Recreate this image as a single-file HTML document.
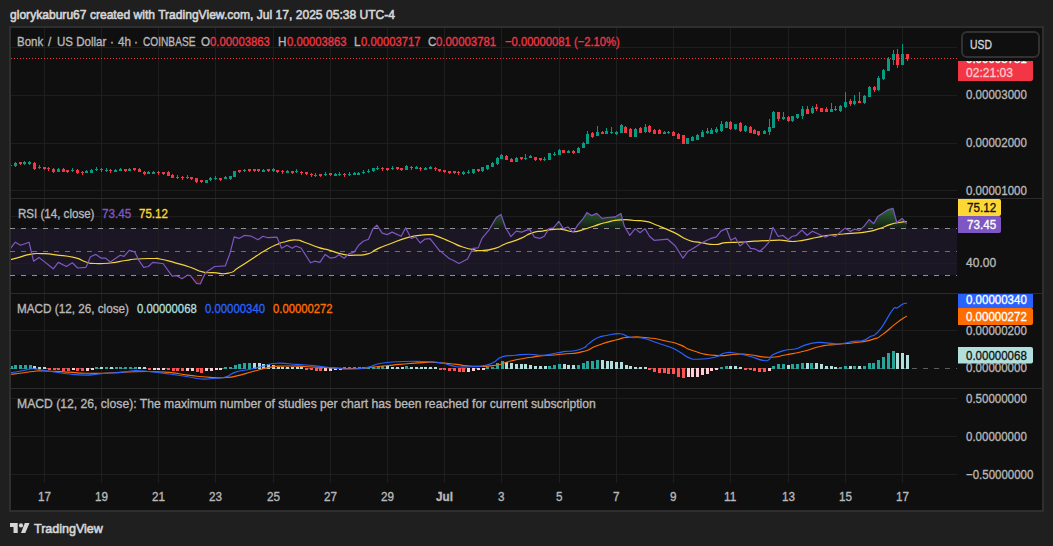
<!DOCTYPE html>
<html><head><meta charset="utf-8"><style>
html,body{margin:0;padding:0;width:1053px;height:546px;overflow:hidden;background:#1f1f1f}
.t{position:absolute;white-space:pre;font-family:"Liberation Sans",sans-serif;transform-origin:0 0;-webkit-text-stroke:0.35px currentColor}
</style></head><body>
<svg width="1053" height="546" viewBox="0 0 1053 546" style="position:absolute;left:0;top:0"><rect x="9.00" y="26.00" width="1035.00" height="486.00" fill="#2e2e2e" /><rect x="11.00" y="28.00" width="1031.00" height="482.00" fill="#0f0f0f" /><rect x="11.00" y="228.00" width="946.00" height="47.00" fill="#1a1624" /><rect x="44.00" y="28.00" width="1.00" height="455.00" fill="#1e1e1e" /><rect x="101.00" y="28.00" width="1.00" height="455.00" fill="#1e1e1e" /><rect x="158.00" y="28.00" width="1.00" height="455.00" fill="#1e1e1e" /><rect x="215.00" y="28.00" width="1.00" height="455.00" fill="#1e1e1e" /><rect x="273.00" y="28.00" width="1.00" height="455.00" fill="#1e1e1e" /><rect x="330.00" y="28.00" width="1.00" height="455.00" fill="#1e1e1e" /><rect x="387.00" y="28.00" width="1.00" height="455.00" fill="#1e1e1e" /><rect x="444.00" y="28.00" width="1.00" height="455.00" fill="#1e1e1e" /><rect x="501.00" y="28.00" width="1.00" height="455.00" fill="#1e1e1e" /><rect x="559.00" y="28.00" width="1.00" height="455.00" fill="#1e1e1e" /><rect x="616.00" y="28.00" width="1.00" height="455.00" fill="#1e1e1e" /><rect x="673.00" y="28.00" width="1.00" height="455.00" fill="#1e1e1e" /><rect x="730.00" y="28.00" width="1.00" height="455.00" fill="#1e1e1e" /><rect x="788.00" y="28.00" width="1.00" height="455.00" fill="#1e1e1e" /><rect x="845.00" y="28.00" width="1.00" height="455.00" fill="#1e1e1e" /><rect x="902.00" y="28.00" width="1.00" height="455.00" fill="#1e1e1e" /><rect x="11.00" y="47.00" width="946.00" height="1.00" fill="#1e1e1e" /><rect x="11.00" y="95.00" width="946.00" height="1.00" fill="#1e1e1e" /><rect x="11.00" y="143.00" width="946.00" height="1.00" fill="#1e1e1e" /><rect x="11.00" y="190.00" width="946.00" height="1.00" fill="#1e1e1e" /><rect x="11.00" y="216.00" width="946.00" height="1.00" fill="#1e1e1e" /><rect x="11.00" y="263.00" width="946.00" height="1.00" fill="#1e1e1e" /><rect x="11.00" y="330.00" width="946.00" height="1.00" fill="#1e1e1e" /><rect x="11.00" y="398.00" width="946.00" height="1.00" fill="#1e1e1e" /><rect x="11.00" y="436.00" width="946.00" height="1.00" fill="#1e1e1e" /><rect x="11.00" y="474.00" width="946.00" height="1.00" fill="#1e1e1e" /><rect x="11.00" y="198.00" width="1031.00" height="1.00" fill="#2b2b2b" /><rect x="11.00" y="293.00" width="1031.00" height="1.00" fill="#2b2b2b" /><rect x="11.00" y="388.00" width="1031.00" height="1.00" fill="#2b2b2b" /><clipPath id="pc"><rect x="11" y="28" width="946" height="170"/></clipPath><clipPath id="rc"><rect x="11" y="199" width="946" height="94"/></clipPath><clipPath id="mc"><rect x="11" y="294" width="946" height="94"/></clipPath><line x1="11" y1="58.5" x2="957" y2="58.5" stroke="#F23645" stroke-width="1" stroke-dasharray="1 2"/><g clip-path="url(#pc)" shape-rendering="crispEdges"><rect x="10" y="163.2" width="1" height="3.6" fill="#089981"/><rect x="9" y="164.8" width="3" height="1.5" fill="#089981"/><rect x="15" y="162.4" width="1" height="4.2" fill="#089981"/><rect x="14" y="163.0" width="3" height="3.0" fill="#089981"/><rect x="20" y="161.8" width="1" height="3.6" fill="#F23645"/><rect x="19" y="162.4" width="3" height="1.5" fill="#F23645"/><rect x="24" y="160.9" width="1" height="3.6" fill="#089981"/><rect x="23" y="162.4" width="3" height="1.5" fill="#089981"/><rect x="29" y="160.9" width="1" height="3.6" fill="#089981"/><rect x="28" y="162.4" width="3" height="1.5" fill="#089981"/><rect x="34" y="161.9" width="1" height="7.7" fill="#F23645"/><rect x="33" y="162.5" width="3" height="6.5" fill="#F23645"/><rect x="39" y="165.2" width="1" height="3.6" fill="#089981"/><rect x="38" y="166.8" width="3" height="1.5" fill="#089981"/><rect x="44" y="166.5" width="1" height="3.6" fill="#F23645"/><rect x="43" y="167.1" width="3" height="1.5" fill="#F23645"/><rect x="48" y="167.2" width="1" height="3.6" fill="#F23645"/><rect x="47" y="167.8" width="3" height="1.5" fill="#F23645"/><rect x="53" y="168.0" width="1" height="4.6" fill="#F23645"/><rect x="52" y="168.6" width="3" height="3.4" fill="#F23645"/><rect x="58" y="168.4" width="1" height="3.8" fill="#089981"/><rect x="57" y="169.0" width="3" height="2.6" fill="#089981"/><rect x="63" y="168.4" width="1" height="3.8" fill="#F23645"/><rect x="62" y="169.0" width="3" height="2.6" fill="#F23645"/><rect x="67" y="169.5" width="1" height="3.6" fill="#F23645"/><rect x="66" y="170.1" width="3" height="1.5" fill="#F23645"/><rect x="72" y="168.2" width="1" height="3.6" fill="#089981"/><rect x="71" y="169.8" width="3" height="1.5" fill="#089981"/><rect x="77" y="169.4" width="1" height="4.2" fill="#F23645"/><rect x="76" y="170.0" width="3" height="3.0" fill="#F23645"/><rect x="82" y="171.1" width="1" height="3.6" fill="#F23645"/><rect x="81" y="171.7" width="3" height="1.5" fill="#F23645"/><rect x="86" y="169.8" width="1" height="3.6" fill="#089981"/><rect x="85" y="171.2" width="3" height="1.5" fill="#089981"/><rect x="91" y="169.0" width="1" height="4.3" fill="#089981"/><rect x="90" y="169.6" width="3" height="3.1" fill="#089981"/><rect x="96" y="167.1" width="1" height="3.6" fill="#089981"/><rect x="95" y="168.6" width="3" height="1.5" fill="#089981"/><rect x="101" y="168.2" width="1" height="3.6" fill="#F23645"/><rect x="100" y="168.8" width="3" height="1.5" fill="#F23645"/><rect x="106" y="168.2" width="1" height="3.6" fill="#089981"/><rect x="105" y="169.7" width="3" height="1.5" fill="#089981"/><rect x="110" y="169.1" width="1" height="3.6" fill="#F23645"/><rect x="109" y="169.7" width="3" height="1.5" fill="#F23645"/><rect x="115" y="168.8" width="1" height="3.6" fill="#089981"/><rect x="114" y="170.3" width="3" height="1.5" fill="#089981"/><rect x="120" y="167.8" width="1" height="3.6" fill="#089981"/><rect x="119" y="169.3" width="3" height="1.5" fill="#089981"/><rect x="125" y="168.8" width="1" height="3.6" fill="#F23645"/><rect x="124" y="169.3" width="3" height="1.5" fill="#F23645"/><rect x="129" y="167.6" width="1" height="3.6" fill="#089981"/><rect x="128" y="169.1" width="3" height="1.5" fill="#089981"/><rect x="134" y="167.7" width="1" height="3.6" fill="#F23645"/><rect x="133" y="168.2" width="3" height="1.5" fill="#F23645"/><rect x="139" y="168.0" width="1" height="4.2" fill="#F23645"/><rect x="138" y="168.6" width="3" height="3.0" fill="#F23645"/><rect x="144" y="171.0" width="1" height="3.5" fill="#F23645"/><rect x="143" y="171.6" width="3" height="2.3" fill="#F23645"/><rect x="148" y="170.6" width="1" height="3.6" fill="#089981"/><rect x="147" y="172.1" width="3" height="1.5" fill="#089981"/><rect x="153" y="170.6" width="1" height="3.6" fill="#089981"/><rect x="152" y="172.1" width="3" height="1.5" fill="#089981"/><rect x="158" y="171.1" width="1" height="3.6" fill="#F23645"/><rect x="157" y="171.7" width="3" height="1.5" fill="#F23645"/><rect x="163" y="171.8" width="1" height="3.6" fill="#F23645"/><rect x="162" y="172.3" width="3" height="1.5" fill="#F23645"/><rect x="168" y="171.4" width="1" height="5.0" fill="#F23645"/><rect x="167" y="172.0" width="3" height="3.8" fill="#F23645"/><rect x="172" y="174.0" width="1" height="4.3" fill="#F23645"/><rect x="171" y="174.6" width="3" height="3.1" fill="#F23645"/><rect x="177" y="175.2" width="1" height="3.6" fill="#089981"/><rect x="176" y="176.7" width="3" height="1.5" fill="#089981"/><rect x="182" y="176.1" width="1" height="3.6" fill="#F23645"/><rect x="181" y="176.7" width="3" height="1.5" fill="#F23645"/><rect x="187" y="175.2" width="1" height="3.6" fill="#089981"/><rect x="186" y="176.7" width="3" height="1.5" fill="#089981"/><rect x="191" y="176.8" width="1" height="3.6" fill="#F23645"/><rect x="190" y="177.3" width="3" height="1.5" fill="#F23645"/><rect x="196" y="177.5" width="1" height="5.0" fill="#F23645"/><rect x="195" y="178.1" width="3" height="3.8" fill="#F23645"/><rect x="201" y="179.8" width="1" height="3.6" fill="#F23645"/><rect x="200" y="180.4" width="3" height="1.5" fill="#F23645"/><rect x="206" y="179.5" width="1" height="3.8" fill="#089981"/><rect x="205" y="180.1" width="3" height="2.6" fill="#089981"/><rect x="210" y="176.9" width="1" height="3.6" fill="#089981"/><rect x="209" y="178.4" width="3" height="1.5" fill="#089981"/><rect x="215" y="176.2" width="1" height="3.6" fill="#089981"/><rect x="214" y="177.7" width="3" height="1.5" fill="#089981"/><rect x="220" y="177.6" width="1" height="3.6" fill="#F23645"/><rect x="219" y="178.2" width="3" height="1.5" fill="#F23645"/><rect x="225" y="175.8" width="1" height="3.6" fill="#089981"/><rect x="224" y="177.3" width="3" height="1.5" fill="#089981"/><rect x="230" y="175.5" width="1" height="4.3" fill="#089981"/><rect x="229" y="176.1" width="3" height="3.1" fill="#089981"/><rect x="234" y="170.7" width="1" height="6.5" fill="#089981"/><rect x="233" y="171.3" width="3" height="5.3" fill="#089981"/><rect x="239" y="169.7" width="1" height="3.6" fill="#F23645"/><rect x="238" y="170.2" width="3" height="1.5" fill="#F23645"/><rect x="244" y="169.2" width="1" height="2.7" fill="#089981"/><rect x="243" y="169.8" width="3" height="1.5" fill="#089981"/><rect x="249" y="168.8" width="1" height="3.6" fill="#F23645"/><rect x="248" y="169.4" width="3" height="1.5" fill="#F23645"/><rect x="254" y="168.8" width="1" height="3.6" fill="#F23645"/><rect x="253" y="169.4" width="3" height="1.5" fill="#F23645"/><rect x="258" y="168.8" width="1" height="3.6" fill="#F23645"/><rect x="257" y="169.4" width="3" height="1.5" fill="#F23645"/><rect x="263" y="168.6" width="1" height="3.6" fill="#089981"/><rect x="262" y="170.1" width="3" height="1.5" fill="#089981"/><rect x="268" y="168.7" width="1" height="3.6" fill="#F23645"/><rect x="267" y="169.2" width="3" height="1.5" fill="#F23645"/><rect x="273" y="167.9" width="1" height="3.6" fill="#089981"/><rect x="272" y="169.4" width="3" height="1.5" fill="#089981"/><rect x="277" y="169.7" width="1" height="3.6" fill="#F23645"/><rect x="276" y="170.2" width="3" height="1.5" fill="#F23645"/><rect x="282" y="170.0" width="1" height="3.6" fill="#F23645"/><rect x="281" y="170.6" width="3" height="1.5" fill="#F23645"/><rect x="287" y="169.8" width="1" height="3.6" fill="#089981"/><rect x="286" y="171.2" width="3" height="1.5" fill="#089981"/><rect x="292" y="170.7" width="1" height="3.6" fill="#F23645"/><rect x="291" y="171.2" width="3" height="1.5" fill="#F23645"/><rect x="296" y="169.4" width="1" height="3.6" fill="#089981"/><rect x="295" y="170.9" width="3" height="1.5" fill="#089981"/><rect x="301" y="171.2" width="1" height="3.6" fill="#F23645"/><rect x="300" y="171.8" width="3" height="1.5" fill="#F23645"/><rect x="306" y="171.5" width="1" height="3.6" fill="#F23645"/><rect x="305" y="172.1" width="3" height="1.5" fill="#F23645"/><rect x="311" y="173.2" width="1" height="3.6" fill="#F23645"/><rect x="310" y="173.8" width="3" height="1.5" fill="#F23645"/><rect x="315" y="173.2" width="1" height="3.6" fill="#089981"/><rect x="314" y="174.7" width="3" height="1.5" fill="#089981"/><rect x="320" y="173.7" width="1" height="3.6" fill="#F23645"/><rect x="319" y="174.2" width="3" height="1.5" fill="#F23645"/><rect x="325" y="172.3" width="1" height="3.6" fill="#089981"/><rect x="324" y="173.8" width="3" height="1.5" fill="#089981"/><rect x="330" y="172.7" width="1" height="3.6" fill="#F23645"/><rect x="329" y="173.2" width="3" height="1.5" fill="#F23645"/><rect x="335" y="172.6" width="1" height="3.6" fill="#089981"/><rect x="334" y="174.1" width="3" height="1.5" fill="#089981"/><rect x="339" y="172.1" width="1" height="3.6" fill="#089981"/><rect x="338" y="173.6" width="3" height="1.5" fill="#089981"/><rect x="344" y="173.0" width="1" height="3.6" fill="#F23645"/><rect x="343" y="173.6" width="3" height="1.5" fill="#F23645"/><rect x="349" y="172.1" width="1" height="3.6" fill="#089981"/><rect x="348" y="173.6" width="3" height="1.5" fill="#089981"/><rect x="354" y="171.8" width="1" height="3.6" fill="#089981"/><rect x="353" y="173.2" width="3" height="1.5" fill="#089981"/><rect x="358" y="171.7" width="1" height="3.6" fill="#089981"/><rect x="357" y="173.2" width="3" height="1.5" fill="#089981"/><rect x="363" y="170.2" width="1" height="3.6" fill="#089981"/><rect x="362" y="171.8" width="3" height="1.5" fill="#089981"/><rect x="368" y="169.4" width="1" height="3.6" fill="#089981"/><rect x="367" y="170.9" width="3" height="1.5" fill="#089981"/><rect x="373" y="167.6" width="1" height="4.3" fill="#089981"/><rect x="372" y="168.2" width="3" height="3.1" fill="#089981"/><rect x="377" y="166.2" width="1" height="3.6" fill="#089981"/><rect x="376" y="167.8" width="3" height="1.5" fill="#089981"/><rect x="382" y="167.2" width="1" height="3.6" fill="#F23645"/><rect x="381" y="167.8" width="3" height="1.5" fill="#F23645"/><rect x="387" y="167.7" width="1" height="3.6" fill="#F23645"/><rect x="386" y="168.2" width="3" height="1.5" fill="#F23645"/><rect x="392" y="166.2" width="1" height="3.6" fill="#089981"/><rect x="391" y="167.8" width="3" height="1.5" fill="#089981"/><rect x="397" y="166.8" width="1" height="3.6" fill="#F23645"/><rect x="396" y="167.4" width="3" height="1.5" fill="#F23645"/><rect x="401" y="167.7" width="1" height="3.6" fill="#F23645"/><rect x="400" y="168.2" width="3" height="1.5" fill="#F23645"/><rect x="406" y="165.1" width="1" height="5.3" fill="#089981"/><rect x="405" y="165.7" width="3" height="4.1" fill="#089981"/><rect x="411" y="166.2" width="1" height="3.6" fill="#F23645"/><rect x="410" y="166.8" width="3" height="1.5" fill="#F23645"/><rect x="416" y="165.8" width="1" height="3.6" fill="#089981"/><rect x="415" y="167.2" width="3" height="1.5" fill="#089981"/><rect x="420" y="167.2" width="1" height="3.6" fill="#F23645"/><rect x="419" y="167.8" width="3" height="1.5" fill="#F23645"/><rect x="425" y="166.8" width="1" height="3.6" fill="#089981"/><rect x="424" y="168.2" width="3" height="1.5" fill="#089981"/><rect x="430" y="165.8" width="1" height="3.6" fill="#089981"/><rect x="429" y="167.2" width="3" height="1.5" fill="#089981"/><rect x="435" y="167.2" width="1" height="3.6" fill="#F23645"/><rect x="434" y="167.8" width="3" height="1.5" fill="#F23645"/><rect x="439" y="168.5" width="1" height="3.6" fill="#F23645"/><rect x="438" y="169.1" width="3" height="1.5" fill="#F23645"/><rect x="444" y="169.5" width="1" height="3.6" fill="#F23645"/><rect x="443" y="170.1" width="3" height="1.5" fill="#F23645"/><rect x="449" y="170.7" width="1" height="3.6" fill="#F23645"/><rect x="448" y="171.2" width="3" height="1.5" fill="#F23645"/><rect x="454" y="170.7" width="1" height="3.6" fill="#F23645"/><rect x="453" y="171.2" width="3" height="1.5" fill="#F23645"/><rect x="458" y="171.2" width="1" height="3.6" fill="#F23645"/><rect x="457" y="171.8" width="3" height="1.5" fill="#F23645"/><rect x="463" y="170.9" width="1" height="3.6" fill="#089981"/><rect x="462" y="172.4" width="3" height="1.5" fill="#089981"/><rect x="468" y="170.2" width="1" height="3.6" fill="#089981"/><rect x="467" y="171.7" width="3" height="1.5" fill="#089981"/><rect x="473" y="168.8" width="1" height="4.7" fill="#089981"/><rect x="472" y="169.4" width="3" height="3.5" fill="#089981"/><rect x="478" y="168.5" width="1" height="3.6" fill="#F23645"/><rect x="477" y="169.1" width="3" height="1.5" fill="#F23645"/><rect x="482" y="166.8" width="1" height="4.8" fill="#089981"/><rect x="481" y="167.4" width="3" height="3.6" fill="#089981"/><rect x="487" y="164.7" width="1" height="4.9" fill="#089981"/><rect x="486" y="165.3" width="3" height="3.7" fill="#089981"/><rect x="492" y="162.4" width="1" height="5.0" fill="#089981"/><rect x="491" y="163.0" width="3" height="3.8" fill="#089981"/><rect x="497" y="157.1" width="1" height="7.5" fill="#089981"/><rect x="496" y="157.7" width="3" height="6.3" fill="#089981"/><rect x="501" y="153.7" width="1" height="5.7" fill="#089981"/><rect x="500" y="155.4" width="3" height="3.4" fill="#089981"/><rect x="506" y="155.1" width="1" height="5.3" fill="#F23645"/><rect x="505" y="155.7" width="3" height="4.1" fill="#F23645"/><rect x="511" y="158.2" width="1" height="4.2" fill="#F23645"/><rect x="510" y="158.8" width="3" height="3.0" fill="#F23645"/><rect x="516" y="157.4" width="1" height="5.0" fill="#089981"/><rect x="515" y="158.0" width="3" height="3.8" fill="#089981"/><rect x="521" y="156.7" width="1" height="3.6" fill="#F23645"/><rect x="520" y="157.2" width="3" height="1.5" fill="#F23645"/><rect x="525" y="154.2" width="1" height="5.5" fill="#089981"/><rect x="524" y="157.6" width="3" height="1.5" fill="#089981"/><rect x="530" y="154.8" width="1" height="3.6" fill="#089981"/><rect x="529" y="156.2" width="3" height="1.5" fill="#089981"/><rect x="535" y="156.6" width="1" height="4.3" fill="#F23645"/><rect x="534" y="157.2" width="3" height="3.1" fill="#F23645"/><rect x="540" y="157.8" width="1" height="3.6" fill="#F23645"/><rect x="539" y="158.4" width="3" height="1.5" fill="#F23645"/><rect x="544" y="157.2" width="1" height="3.6" fill="#089981"/><rect x="543" y="158.8" width="3" height="1.5" fill="#089981"/><rect x="549" y="152.8" width="1" height="7.6" fill="#089981"/><rect x="548" y="153.4" width="3" height="6.4" fill="#089981"/><rect x="554" y="152.2" width="1" height="3.6" fill="#089981"/><rect x="553" y="153.8" width="3" height="1.5" fill="#089981"/><rect x="559" y="149.4" width="1" height="5.9" fill="#089981"/><rect x="558" y="150.0" width="3" height="4.7" fill="#089981"/><rect x="563" y="149.8" width="1" height="3.5" fill="#F23645"/><rect x="562" y="150.4" width="3" height="2.3" fill="#F23645"/><rect x="568" y="150.4" width="1" height="2.9" fill="#089981"/><rect x="567" y="151.0" width="3" height="1.7" fill="#089981"/><rect x="573" y="150.4" width="1" height="3.2" fill="#F23645"/><rect x="572" y="151.0" width="3" height="2.0" fill="#F23645"/><rect x="578" y="147.2" width="1" height="6.1" fill="#089981"/><rect x="577" y="147.8" width="3" height="4.9" fill="#089981"/><rect x="583" y="142.4" width="1" height="6.0" fill="#089981"/><rect x="582" y="143.0" width="3" height="4.8" fill="#089981"/><rect x="587" y="131.0" width="1" height="13.2" fill="#089981"/><rect x="586" y="134.0" width="3" height="9.6" fill="#089981"/><rect x="592" y="132.3" width="1" height="5.3" fill="#F23645"/><rect x="591" y="132.9" width="3" height="4.1" fill="#F23645"/><rect x="597" y="126.0" width="1" height="10.1" fill="#089981"/><rect x="596" y="131.9" width="3" height="3.6" fill="#089981"/><rect x="602" y="131.3" width="1" height="3.0" fill="#F23645"/><rect x="601" y="131.9" width="3" height="1.8" fill="#F23645"/><rect x="606" y="128.0" width="1" height="6.3" fill="#089981"/><rect x="605" y="131.0" width="3" height="2.7" fill="#089981"/><rect x="611" y="127.4" width="1" height="6.2" fill="#089981"/><rect x="610" y="131.5" width="3" height="1.5" fill="#089981"/><rect x="616" y="131.4" width="1" height="3.2" fill="#089981"/><rect x="615" y="132.0" width="3" height="2.0" fill="#089981"/><rect x="621" y="124.4" width="1" height="8.9" fill="#089981"/><rect x="620" y="125.0" width="3" height="7.7" fill="#089981"/><rect x="625" y="126.4" width="1" height="6.9" fill="#F23645"/><rect x="624" y="127.0" width="3" height="5.7" fill="#F23645"/><rect x="630" y="127.9" width="1" height="9.5" fill="#F23645"/><rect x="629" y="128.5" width="3" height="8.3" fill="#F23645"/><rect x="635" y="128.3" width="1" height="9.1" fill="#089981"/><rect x="634" y="128.9" width="3" height="7.9" fill="#089981"/><rect x="640" y="127.4" width="1" height="5.9" fill="#F23645"/><rect x="639" y="128.0" width="3" height="4.7" fill="#F23645"/><rect x="645" y="124.0" width="1" height="8.6" fill="#089981"/><rect x="644" y="127.0" width="3" height="5.0" fill="#089981"/><rect x="649" y="125.2" width="1" height="7.4" fill="#F23645"/><rect x="648" y="125.8" width="3" height="6.2" fill="#F23645"/><rect x="654" y="129.4" width="1" height="4.9" fill="#F23645"/><rect x="653" y="130.0" width="3" height="3.7" fill="#F23645"/><rect x="659" y="129.0" width="1" height="5.3" fill="#F23645"/><rect x="658" y="130.4" width="3" height="3.3" fill="#F23645"/><rect x="664" y="131.0" width="1" height="3.1" fill="#089981"/><rect x="663" y="132.0" width="3" height="1.5" fill="#089981"/><rect x="668" y="130.5" width="1" height="3.1" fill="#089981"/><rect x="667" y="131.5" width="3" height="1.5" fill="#089981"/><rect x="673" y="131.4" width="1" height="4.9" fill="#F23645"/><rect x="672" y="132.0" width="3" height="3.7" fill="#F23645"/><rect x="678" y="133.4" width="1" height="6.0" fill="#F23645"/><rect x="677" y="134.0" width="3" height="4.8" fill="#F23645"/><rect x="683" y="134.7" width="1" height="9.7" fill="#F23645"/><rect x="682" y="135.3" width="3" height="8.5" fill="#F23645"/><rect x="687" y="137.7" width="1" height="6.7" fill="#089981"/><rect x="686" y="138.3" width="3" height="5.5" fill="#089981"/><rect x="692" y="136.2" width="1" height="5.1" fill="#089981"/><rect x="691" y="136.8" width="3" height="3.9" fill="#089981"/><rect x="697" y="134.4" width="1" height="6.0" fill="#089981"/><rect x="696" y="135.0" width="3" height="4.8" fill="#089981"/><rect x="702" y="130.4" width="1" height="7.0" fill="#089981"/><rect x="701" y="131.5" width="3" height="5.3" fill="#089981"/><rect x="707" y="128.0" width="1" height="6.0" fill="#089981"/><rect x="706" y="131.0" width="3" height="2.4" fill="#089981"/><rect x="711" y="128.0" width="1" height="6.3" fill="#089981"/><rect x="710" y="130.0" width="3" height="3.7" fill="#089981"/><rect x="716" y="127.0" width="1" height="5.6" fill="#089981"/><rect x="715" y="129.0" width="3" height="3.0" fill="#089981"/><rect x="721" y="121.0" width="1" height="10.6" fill="#089981"/><rect x="720" y="124.0" width="3" height="7.0" fill="#089981"/><rect x="726" y="121.0" width="1" height="7.3" fill="#089981"/><rect x="725" y="121.5" width="3" height="6.2" fill="#089981"/><rect x="730" y="121.4" width="1" height="8.1" fill="#F23645"/><rect x="729" y="122.0" width="3" height="6.9" fill="#F23645"/><rect x="735" y="123.7" width="1" height="5.8" fill="#089981"/><rect x="734" y="124.3" width="3" height="4.6" fill="#089981"/><rect x="740" y="122.2" width="1" height="9.6" fill="#F23645"/><rect x="739" y="122.8" width="3" height="8.4" fill="#F23645"/><rect x="745" y="125.4" width="1" height="6.4" fill="#089981"/><rect x="744" y="126.0" width="3" height="5.2" fill="#089981"/><rect x="750" y="126.4" width="1" height="6.9" fill="#F23645"/><rect x="749" y="127.0" width="3" height="5.7" fill="#F23645"/><rect x="754" y="129.0" width="1" height="5.3" fill="#F23645"/><rect x="753" y="129.6" width="3" height="4.1" fill="#F23645"/><rect x="758" y="130.6" width="1" height="5.0" fill="#F23645"/><rect x="757" y="131.2" width="3" height="3.8" fill="#F23645"/><rect x="764" y="130.1" width="1" height="4.2" fill="#089981"/><rect x="763" y="130.7" width="3" height="3.0" fill="#089981"/><rect x="769" y="119.3" width="1" height="15.5" fill="#089981"/><rect x="768" y="126.9" width="3" height="5.3" fill="#089981"/><rect x="773" y="111.4" width="1" height="16.8" fill="#089981"/><rect x="772" y="112.0" width="3" height="15.6" fill="#089981"/><rect x="778" y="112.0" width="1" height="9.0" fill="#F23645"/><rect x="777" y="112.4" width="3" height="6.9" fill="#F23645"/><rect x="783" y="112.0" width="1" height="7.9" fill="#089981"/><rect x="782" y="117.0" width="3" height="2.3" fill="#089981"/><rect x="788" y="116.4" width="1" height="5.2" fill="#F23645"/><rect x="787" y="117.0" width="3" height="4.0" fill="#F23645"/><rect x="792" y="115.6" width="1" height="6.0" fill="#089981"/><rect x="791" y="116.2" width="3" height="4.8" fill="#089981"/><rect x="797" y="113.8" width="1" height="4.8" fill="#089981"/><rect x="796" y="114.4" width="3" height="3.6" fill="#089981"/><rect x="802" y="105.9" width="1" height="13.1" fill="#089981"/><rect x="801" y="109.0" width="3" height="7.0" fill="#089981"/><rect x="807" y="106.0" width="1" height="8.1" fill="#F23645"/><rect x="806" y="108.6" width="3" height="4.9" fill="#F23645"/><rect x="812" y="106.0" width="1" height="7.5" fill="#089981"/><rect x="811" y="107.9" width="3" height="5.0" fill="#089981"/><rect x="816" y="104.0" width="1" height="7.0" fill="#F23645"/><rect x="815" y="106.8" width="3" height="1.8" fill="#F23645"/><rect x="821" y="107.7" width="1" height="4.6" fill="#F23645"/><rect x="820" y="108.3" width="3" height="3.4" fill="#F23645"/><rect x="826" y="107.0" width="1" height="5.3" fill="#F23645"/><rect x="825" y="109.4" width="3" height="2.3" fill="#F23645"/><rect x="831" y="103.3" width="1" height="9.0" fill="#089981"/><rect x="830" y="109.0" width="3" height="2.7" fill="#089981"/><rect x="835" y="106.0" width="1" height="4.8" fill="#F23645"/><rect x="834" y="108.6" width="3" height="1.6" fill="#F23645"/><rect x="840" y="105.0" width="1" height="6.6" fill="#089981"/><rect x="839" y="105.6" width="3" height="5.4" fill="#089981"/><rect x="845" y="92.0" width="1" height="15.6" fill="#089981"/><rect x="844" y="102.2" width="3" height="4.8" fill="#089981"/><rect x="850" y="99.0" width="1" height="7.0" fill="#F23645"/><rect x="849" y="100.7" width="3" height="3.7" fill="#F23645"/><rect x="854" y="95.0" width="1" height="9.6" fill="#089981"/><rect x="853" y="100.7" width="3" height="3.3" fill="#089981"/><rect x="859" y="92.0" width="1" height="11.1" fill="#F23645"/><rect x="858" y="100.7" width="3" height="1.8" fill="#F23645"/><rect x="864" y="95.1" width="1" height="8.4" fill="#089981"/><rect x="863" y="95.7" width="3" height="7.2" fill="#089981"/><rect x="869" y="86.4" width="1" height="11.0" fill="#089981"/><rect x="868" y="87.0" width="3" height="9.8" fill="#089981"/><rect x="874" y="85.8" width="1" height="6.2" fill="#F23645"/><rect x="873" y="86.6" width="3" height="3.4" fill="#F23645"/><rect x="878" y="76.0" width="1" height="15.0" fill="#089981"/><rect x="877" y="78.0" width="3" height="12.0" fill="#089981"/><rect x="883" y="69.0" width="1" height="10.6" fill="#089981"/><rect x="882" y="70.0" width="3" height="9.0" fill="#089981"/><rect x="888" y="57.0" width="1" height="14.3" fill="#089981"/><rect x="887" y="59.0" width="3" height="11.7" fill="#089981"/><rect x="893" y="49.8" width="1" height="15.1" fill="#089981"/><rect x="892" y="54.2" width="3" height="5.5" fill="#089981"/><rect x="897" y="49.0" width="1" height="18.7" fill="#F23645"/><rect x="896" y="54.2" width="3" height="10.7" fill="#F23645"/><rect x="902" y="44.0" width="1" height="20.9" fill="#089981"/><rect x="901" y="54.2" width="3" height="10.7" fill="#089981"/><rect x="907" y="54.2" width="1" height="6.6" fill="#F23645"/><rect x="906" y="54.2" width="3" height="4.4" fill="#F23645"/></g><defs><linearGradient id="gg" gradientUnits="userSpaceOnUse" x1="0" y1="207" x2="0" y2="229"><stop offset="0" stop-color="#2f6a33"/><stop offset="1" stop-color="#131c15"/></linearGradient><linearGradient id="rg" gradientUnits="userSpaceOnUse" x1="0" y1="275" x2="0" y2="286"><stop offset="0" stop-color="#1c1212"/><stop offset="1" stop-color="#5e1a1a"/></linearGradient><clipPath id="ob"><rect x="11" y="199" width="946" height="29.5"/></clipPath><clipPath id="os"><rect x="11" y="275" width="946" height="18"/></clipPath></defs><polygon points="10.0,228.5 10.0,249.0 15.3,242.2 20.6,245.3 29.0,242.2 33.6,261.2 38.9,257.4 53.3,268.8 58.3,262.4 66.5,266.5 72.3,262.8 77.6,268.0 86.0,267.3 90.5,256.7 95.9,254.4 101.2,258.2 105.7,258.2 110.3,262.0 120.2,255.2 124.0,256.4 129.3,250.3 134.6,251.8 139.2,260.9 143.7,267.3 148.3,266.5 152.9,262.4 162.0,263.5 163.0,263.5 172.2,276.1 176.7,275.7 182.0,278.7 187.4,275.2 190.4,275.7 196.5,283.3 200.3,284.0 205.6,272.6 214.7,266.5 225.3,265.8 229.9,253.6 234.2,236.9 239.0,238.4 244.3,235.4 251.2,236.2 258.0,239.7 263.0,236.2 267.9,237.7 277.0,237.2 281.6,248.3 286.9,245.3 292.2,248.3 296.0,246.0 301.3,248.3 310.5,262.8 314.6,261.2 319.9,262.4 325.2,254.4 330.5,258.2 335.1,257.4 338.9,254.8 344.2,258.2 348.8,253.9 354.1,252.1 358.6,245.3 363.2,241.2 368.5,239.2 373.1,228.6 376.9,225.2 382.2,233.1 387.2,234.6 392.1,232.1 401.2,236.2 405.7,227.8 411.1,238.4 415.6,236.9 420.2,243.0 424.7,239.2 430.1,238.7 439.2,250.3 443.7,253.9 449.1,258.5 453.6,260.5 458.9,263.5 467.6,259.0 472.9,248.3 478.2,247.9 482.0,238.4 488.9,230.1 496.5,217.2 501.0,214.4 505.6,227.8 510.9,236.6 516.2,231.1 521.6,232.1 526.9,230.1 529.9,229.6 534.5,237.2 539.8,238.4 544.3,236.2 548.9,228.6 553.5,227.8 558.8,221.4 563.3,228.6 567.9,227.0 573.2,232.4 577.8,224.8 583.1,218.7 586.9,212.6 591.5,215.6 596.8,213.4 602.1,218.4 607.4,217.5 615.0,216.9 620.9,213.4 624.4,226.3 629.8,235.4 635.1,228.6 640.1,232.7 645.0,228.6 649.5,236.2 654.1,240.3 667.8,239.2 675.3,246.0 683.0,258.2 687.5,251.8 696.6,246.3 701.2,243.0 710.3,238.7 716.4,236.9 720.9,231.1 726.3,228.6 730.8,240.3 735.4,237.7 739.9,246.0 745.3,241.5 750.6,248.3 754.4,248.8 759.7,251.4 764.6,247.1 769.1,241.8 772.9,227.4 778.2,236.5 782.8,235.3 788.1,239.8 791.9,236.5 796.5,235.3 801.8,230.1 807.1,235.3 812.4,231.2 825.3,237.2 829.9,235.0 835.2,236.5 845.1,228.1 850.4,231.6 854.2,229.2 859.5,230.4 864.1,226.1 869.1,219.5 873.7,223.6 877.8,216.4 887.7,209.9 893.0,208.4 896.8,222.5 902.1,218.5 906.7,223.6 906.7,228.5" fill="url(#gg)" clip-path="url(#ob)"/><polygon points="10.0,275.0 10.0,249.0 15.3,242.2 20.6,245.3 29.0,242.2 33.6,261.2 38.9,257.4 53.3,268.8 58.3,262.4 66.5,266.5 72.3,262.8 77.6,268.0 86.0,267.3 90.5,256.7 95.9,254.4 101.2,258.2 105.7,258.2 110.3,262.0 120.2,255.2 124.0,256.4 129.3,250.3 134.6,251.8 139.2,260.9 143.7,267.3 148.3,266.5 152.9,262.4 162.0,263.5 163.0,263.5 172.2,276.1 176.7,275.7 182.0,278.7 187.4,275.2 190.4,275.7 196.5,283.3 200.3,284.0 205.6,272.6 214.7,266.5 225.3,265.8 229.9,253.6 234.2,236.9 239.0,238.4 244.3,235.4 251.2,236.2 258.0,239.7 263.0,236.2 267.9,237.7 277.0,237.2 281.6,248.3 286.9,245.3 292.2,248.3 296.0,246.0 301.3,248.3 310.5,262.8 314.6,261.2 319.9,262.4 325.2,254.4 330.5,258.2 335.1,257.4 338.9,254.8 344.2,258.2 348.8,253.9 354.1,252.1 358.6,245.3 363.2,241.2 368.5,239.2 373.1,228.6 376.9,225.2 382.2,233.1 387.2,234.6 392.1,232.1 401.2,236.2 405.7,227.8 411.1,238.4 415.6,236.9 420.2,243.0 424.7,239.2 430.1,238.7 439.2,250.3 443.7,253.9 449.1,258.5 453.6,260.5 458.9,263.5 467.6,259.0 472.9,248.3 478.2,247.9 482.0,238.4 488.9,230.1 496.5,217.2 501.0,214.4 505.6,227.8 510.9,236.6 516.2,231.1 521.6,232.1 526.9,230.1 529.9,229.6 534.5,237.2 539.8,238.4 544.3,236.2 548.9,228.6 553.5,227.8 558.8,221.4 563.3,228.6 567.9,227.0 573.2,232.4 577.8,224.8 583.1,218.7 586.9,212.6 591.5,215.6 596.8,213.4 602.1,218.4 607.4,217.5 615.0,216.9 620.9,213.4 624.4,226.3 629.8,235.4 635.1,228.6 640.1,232.7 645.0,228.6 649.5,236.2 654.1,240.3 667.8,239.2 675.3,246.0 683.0,258.2 687.5,251.8 696.6,246.3 701.2,243.0 710.3,238.7 716.4,236.9 720.9,231.1 726.3,228.6 730.8,240.3 735.4,237.7 739.9,246.0 745.3,241.5 750.6,248.3 754.4,248.8 759.7,251.4 764.6,247.1 769.1,241.8 772.9,227.4 778.2,236.5 782.8,235.3 788.1,239.8 791.9,236.5 796.5,235.3 801.8,230.1 807.1,235.3 812.4,231.2 825.3,237.2 829.9,235.0 835.2,236.5 845.1,228.1 850.4,231.6 854.2,229.2 859.5,230.4 864.1,226.1 869.1,219.5 873.7,223.6 877.8,216.4 887.7,209.9 893.0,208.4 896.8,222.5 902.1,218.5 906.7,223.6 906.7,275.0" fill="url(#rg)" clip-path="url(#os)"/><line x1="10" y1="228.5" x2="957" y2="228.5" stroke="#909094" stroke-width="1" stroke-dasharray="5 6"/><line x1="10" y1="251.5" x2="957" y2="251.5" stroke="#6e6e72" stroke-width="1" stroke-dasharray="5 6"/><line x1="10" y1="275.5" x2="957" y2="275.5" stroke="#909094" stroke-width="1" stroke-dasharray="5 6"/><path d="M10.0,259.7 C13.0,258.9 12.5,259.2 19.1,257.4 C25.7,255.6 22.2,255.7 29.8,254.4 C37.4,253.1 33.3,253.5 41.9,253.6 C50.5,253.7 45.0,253.5 55.6,254.8 C66.2,256.1 63.7,255.0 73.8,257.4 C83.9,259.8 78.9,260.0 86.0,262.0 C93.1,264.0 87.0,263.2 95.1,263.5 C103.2,263.8 100.2,264.0 110.3,263.0 C120.4,262.0 116.9,261.8 125.5,260.5 C134.1,259.2 127.0,259.7 136.1,259.0 C145.2,258.3 144.9,258.5 152.9,258.5 C160.9,258.5 152.6,257.6 160.0,259.0 C167.4,260.4 165.1,260.0 175.2,262.8 C185.3,265.6 181.3,264.3 190.4,267.3 C199.5,270.3 195.0,270.1 202.6,271.9 C210.2,273.7 204.6,272.2 213.2,272.6 C221.8,273.0 219.8,274.9 228.4,273.1 C237.0,271.3 230.4,272.5 239.0,267.3 C247.6,262.1 245.1,263.2 254.2,257.4 C263.3,251.6 258.8,254.1 266.4,249.8 C274.0,245.5 270.4,247.3 277.0,244.5 C283.6,241.7 279.8,243.0 286.1,241.5 C292.4,240.0 289.9,239.8 296.0,240.0 C302.1,240.2 296.7,239.7 304.4,242.2 C312.1,244.7 310.6,244.9 319.1,247.6 C327.6,250.3 321.7,248.0 329.8,250.3 C337.9,252.6 334.8,252.8 343.4,254.4 C352.0,256.0 347.5,255.4 355.6,255.2 C363.7,255.0 360.7,255.9 367.8,253.9 C374.9,251.9 369.8,252.3 376.9,249.1 C384.0,245.9 378.9,248.0 389.0,244.2 C399.1,240.4 397.2,240.6 407.3,237.7 C417.4,234.8 411.8,236.4 419.4,235.4 C427.0,234.4 424.5,234.4 430.1,234.6 C435.7,234.8 429.5,233.6 436.1,235.9 C442.7,238.2 441.2,237.9 449.8,241.5 C458.4,245.1 454.5,244.2 462.0,246.8 C469.5,249.4 465.8,248.1 472.2,249.4 C478.6,250.7 473.7,251.0 481.3,250.6 C488.9,250.2 486.9,250.6 495.0,248.3 C503.1,246.0 497.0,247.1 505.6,243.8 C514.2,240.5 512.2,242.0 520.8,238.4 C529.4,234.8 523.8,235.6 531.4,233.1 C539.0,230.6 536.0,232.1 543.6,230.8 C551.2,229.5 547.6,229.7 554.2,229.3 C560.8,228.9 557.2,228.8 563.3,229.6 C569.4,230.4 566.4,231.4 572.5,231.6 C578.6,231.8 574.5,231.9 581.6,230.1 C588.7,228.3 585.6,228.8 593.7,226.3 C601.8,223.8 596.9,224.6 605.9,222.5 C614.9,220.4 611.1,220.6 620.6,219.9 C630.1,219.2 625.9,220.0 634.3,220.5 C642.7,221.0 638.6,220.0 645.7,221.4 C652.8,222.8 646.2,221.1 655.6,224.8 C665.0,228.5 663.2,227.4 673.8,232.4 C684.4,237.4 678.4,236.3 687.5,239.7 C696.6,243.1 692.1,241.1 701.2,242.7 C710.3,244.3 706.8,244.5 714.9,244.5 C723.0,244.5 716.9,243.5 725.5,242.7 C734.1,241.9 731.1,242.7 740.7,242.2 C750.3,241.7 743.4,241.8 754.4,241.2 C765.4,240.6 764.2,240.6 773.7,240.3 C783.2,240.0 777.2,240.0 782.8,240.3 C788.4,240.6 785.3,241.1 790.4,241.3 C795.5,241.5 791.4,241.8 798.0,241.0 C804.6,240.2 801.6,240.4 810.2,238.8 C818.8,237.2 815.2,237.6 823.8,236.2 C832.4,234.8 826.9,235.6 836.0,234.7 C845.1,233.8 841.1,234.3 851.2,233.4 C861.3,232.5 857.3,233.4 866.4,231.9 C875.5,230.4 870.4,231.4 878.5,228.9 C886.6,226.4 883.6,226.4 890.7,224.3 C897.8,222.2 894.5,223.5 899.8,222.5 C905.1,221.5 904.4,221.7 906.7,221.3" fill="none" stroke="#F5D43A" stroke-width="1.2" clip-path="url(#rc)"/><polyline points="10.0,249.0 15.3,242.2 20.6,245.3 29.0,242.2 33.6,261.2 38.9,257.4 53.3,268.8 58.3,262.4 66.5,266.5 72.3,262.8 77.6,268.0 86.0,267.3 90.5,256.7 95.9,254.4 101.2,258.2 105.7,258.2 110.3,262.0 120.2,255.2 124.0,256.4 129.3,250.3 134.6,251.8 139.2,260.9 143.7,267.3 148.3,266.5 152.9,262.4 162.0,263.5 163.0,263.5 172.2,276.1 176.7,275.7 182.0,278.7 187.4,275.2 190.4,275.7 196.5,283.3 200.3,284.0 205.6,272.6 214.7,266.5 225.3,265.8 229.9,253.6 234.2,236.9 239.0,238.4 244.3,235.4 251.2,236.2 258.0,239.7 263.0,236.2 267.9,237.7 277.0,237.2 281.6,248.3 286.9,245.3 292.2,248.3 296.0,246.0 301.3,248.3 310.5,262.8 314.6,261.2 319.9,262.4 325.2,254.4 330.5,258.2 335.1,257.4 338.9,254.8 344.2,258.2 348.8,253.9 354.1,252.1 358.6,245.3 363.2,241.2 368.5,239.2 373.1,228.6 376.9,225.2 382.2,233.1 387.2,234.6 392.1,232.1 401.2,236.2 405.7,227.8 411.1,238.4 415.6,236.9 420.2,243.0 424.7,239.2 430.1,238.7 439.2,250.3 443.7,253.9 449.1,258.5 453.6,260.5 458.9,263.5 467.6,259.0 472.9,248.3 478.2,247.9 482.0,238.4 488.9,230.1 496.5,217.2 501.0,214.4 505.6,227.8 510.9,236.6 516.2,231.1 521.6,232.1 526.9,230.1 529.9,229.6 534.5,237.2 539.8,238.4 544.3,236.2 548.9,228.6 553.5,227.8 558.8,221.4 563.3,228.6 567.9,227.0 573.2,232.4 577.8,224.8 583.1,218.7 586.9,212.6 591.5,215.6 596.8,213.4 602.1,218.4 607.4,217.5 615.0,216.9 620.9,213.4 624.4,226.3 629.8,235.4 635.1,228.6 640.1,232.7 645.0,228.6 649.5,236.2 654.1,240.3 667.8,239.2 675.3,246.0 683.0,258.2 687.5,251.8 696.6,246.3 701.2,243.0 710.3,238.7 716.4,236.9 720.9,231.1 726.3,228.6 730.8,240.3 735.4,237.7 739.9,246.0 745.3,241.5 750.6,248.3 754.4,248.8 759.7,251.4 764.6,247.1 769.1,241.8 772.9,227.4 778.2,236.5 782.8,235.3 788.1,239.8 791.9,236.5 796.5,235.3 801.8,230.1 807.1,235.3 812.4,231.2 825.3,237.2 829.9,235.0 835.2,236.5 845.1,228.1 850.4,231.6 854.2,229.2 859.5,230.4 864.1,226.1 869.1,219.5 873.7,223.6 877.8,216.4 887.7,209.9 893.0,208.4 896.8,222.5 902.1,218.5 906.7,223.6" fill="none" stroke="#7E57C2" stroke-width="1.2" stroke-linejoin="round" clip-path="url(#rc)"/><line x1="10" y1="368.5" x2="957" y2="368.5" stroke="#5c5c5c" stroke-width="1" stroke-dasharray="5 6"/><g clip-path="url(#mc)" shape-rendering="crispEdges"><rect x="10" y="366" width="3" height="3" fill="#26A69A"/><rect x="14" y="365" width="3" height="4" fill="#26A69A"/><rect x="19" y="365" width="3" height="4" fill="#26A69A"/><rect x="24" y="365" width="3" height="4" fill="#26A69A"/><rect x="29" y="365" width="3" height="4" fill="#26A69A"/><rect x="33" y="366" width="3" height="3" fill="#B2DFDB"/><rect x="38" y="367" width="3" height="2" fill="#B2DFDB"/><rect x="43" y="367" width="3" height="2" fill="#B2DFDB"/><rect x="48" y="368" width="3" height="2" fill="#FF5252"/><rect x="53" y="368" width="3" height="2" fill="#FF5252"/><rect x="57" y="368" width="3" height="2" fill="#FF5252"/><rect x="62" y="368" width="3" height="3" fill="#FF5252"/><rect x="67" y="368" width="3" height="3" fill="#FF5252"/><rect x="72" y="368" width="3" height="2" fill="#FFCDD2"/><rect x="76" y="368" width="3" height="3" fill="#FF5252"/><rect x="81" y="368" width="3" height="3" fill="#FF5252"/><rect x="86" y="368" width="3" height="3" fill="#FFCDD2"/><rect x="91" y="368" width="3" height="2" fill="#FFCDD2"/><rect x="95" y="367" width="3" height="2" fill="#26A69A"/><rect x="100" y="367" width="3" height="2" fill="#B2DFDB"/><rect x="105" y="367" width="3" height="2" fill="#26A69A"/><rect x="110" y="367" width="3" height="2" fill="#B2DFDB"/><rect x="115" y="367" width="3" height="2" fill="#26A69A"/><rect x="119" y="367" width="3" height="2" fill="#26A69A"/><rect x="124" y="367" width="3" height="2" fill="#26A69A"/><rect x="129" y="367" width="3" height="2" fill="#26A69A"/><rect x="134" y="367" width="3" height="2" fill="#26A69A"/><rect x="138" y="367" width="3" height="2" fill="#B2DFDB"/><rect x="143" y="367" width="3" height="2" fill="#B2DFDB"/><rect x="148" y="368" width="3" height="2" fill="#FF5252"/><rect x="153" y="368" width="3" height="2" fill="#FFCDD2"/><rect x="157" y="368" width="3" height="2" fill="#FFCDD2"/><rect x="162" y="368" width="3" height="2" fill="#FFCDD2"/><rect x="167" y="368" width="3" height="2" fill="#FF5252"/><rect x="172" y="368" width="3" height="3" fill="#FF5252"/><rect x="176" y="368" width="3" height="3" fill="#FF5252"/><rect x="181" y="368" width="3" height="3" fill="#FF5252"/><rect x="186" y="368" width="3" height="3" fill="#FFCDD2"/><rect x="191" y="368" width="3" height="3" fill="#FFCDD2"/><rect x="196" y="368" width="3" height="4" fill="#FF5252"/><rect x="200" y="368" width="3" height="5" fill="#FF5252"/><rect x="205" y="368" width="3" height="3" fill="#FFCDD2"/><rect x="210" y="368" width="3" height="3" fill="#FFCDD2"/><rect x="215" y="368" width="3" height="2" fill="#FFCDD2"/><rect x="219" y="368" width="3" height="2" fill="#FFCDD2"/><rect x="224" y="367" width="3" height="2" fill="#26A69A"/><rect x="229" y="367" width="3" height="2" fill="#26A69A"/><rect x="234" y="365" width="3" height="4" fill="#26A69A"/><rect x="238" y="364" width="3" height="5" fill="#26A69A"/><rect x="243" y="363" width="3" height="6" fill="#26A69A"/><rect x="248" y="363" width="3" height="6" fill="#26A69A"/><rect x="253" y="363" width="3" height="6" fill="#B2DFDB"/><rect x="258" y="363" width="3" height="6" fill="#B2DFDB"/><rect x="262" y="364" width="3" height="5" fill="#B2DFDB"/><rect x="267" y="364" width="3" height="5" fill="#B2DFDB"/><rect x="272" y="365" width="3" height="4" fill="#B2DFDB"/><rect x="277" y="367" width="3" height="2" fill="#B2DFDB"/><rect x="281" y="367" width="3" height="2" fill="#B2DFDB"/><rect x="286" y="367" width="3" height="2" fill="#B2DFDB"/><rect x="291" y="367" width="3" height="2" fill="#B2DFDB"/><rect x="296" y="367" width="3" height="2" fill="#B2DFDB"/><rect x="300" y="367" width="3" height="2" fill="#B2DFDB"/><rect x="305" y="368" width="3" height="2" fill="#FF5252"/><rect x="310" y="368" width="3" height="2" fill="#FF5252"/><rect x="315" y="368" width="3" height="3" fill="#FF5252"/><rect x="319" y="368" width="3" height="3" fill="#FF5252"/><rect x="324" y="368" width="3" height="3" fill="#FFCDD2"/><rect x="329" y="368" width="3" height="3" fill="#FFCDD2"/><rect x="334" y="368" width="3" height="2" fill="#FFCDD2"/><rect x="339" y="368" width="3" height="2" fill="#FFCDD2"/><rect x="343" y="367" width="3" height="2" fill="#26A69A"/><rect x="348" y="367" width="3" height="2" fill="#26A69A"/><rect x="353" y="367" width="3" height="2" fill="#26A69A"/><rect x="358" y="367" width="3" height="2" fill="#26A69A"/><rect x="362" y="367" width="3" height="2" fill="#26A69A"/><rect x="367" y="367" width="3" height="2" fill="#26A69A"/><rect x="372" y="367" width="3" height="2" fill="#26A69A"/><rect x="377" y="366" width="3" height="3" fill="#26A69A"/><rect x="381" y="366" width="3" height="3" fill="#26A69A"/><rect x="386" y="366" width="3" height="3" fill="#B2DFDB"/><rect x="391" y="367" width="3" height="2" fill="#B2DFDB"/><rect x="396" y="367" width="3" height="2" fill="#B2DFDB"/><rect x="401" y="367" width="3" height="2" fill="#B2DFDB"/><rect x="405" y="366" width="3" height="3" fill="#26A69A"/><rect x="410" y="367" width="3" height="2" fill="#B2DFDB"/><rect x="415" y="367" width="3" height="2" fill="#B2DFDB"/><rect x="420" y="367" width="3" height="2" fill="#B2DFDB"/><rect x="424" y="367" width="3" height="2" fill="#B2DFDB"/><rect x="429" y="367" width="3" height="2" fill="#B2DFDB"/><rect x="434" y="367" width="3" height="2" fill="#B2DFDB"/><rect x="439" y="368" width="3" height="2" fill="#FF5252"/><rect x="443" y="368" width="3" height="2" fill="#FF5252"/><rect x="448" y="368" width="3" height="3" fill="#FF5252"/><rect x="453" y="368" width="3" height="3" fill="#FF5252"/><rect x="458" y="368" width="3" height="4" fill="#FF5252"/><rect x="462" y="368" width="3" height="4" fill="#FF5252"/><rect x="467" y="368" width="3" height="4" fill="#FFCDD2"/><rect x="472" y="368" width="3" height="3" fill="#FFCDD2"/><rect x="477" y="368" width="3" height="2" fill="#FFCDD2"/><rect x="482" y="368" width="3" height="2" fill="#FFCDD2"/><rect x="486" y="367" width="3" height="2" fill="#26A69A"/><rect x="491" y="367" width="3" height="2" fill="#26A69A"/><rect x="496" y="363" width="3" height="6" fill="#26A69A"/><rect x="501" y="361" width="3" height="8" fill="#26A69A"/><rect x="505" y="362" width="3" height="7" fill="#B2DFDB"/><rect x="510" y="363" width="3" height="6" fill="#B2DFDB"/><rect x="515" y="364" width="3" height="5" fill="#B2DFDB"/><rect x="520" y="364" width="3" height="5" fill="#B2DFDB"/><rect x="524" y="364" width="3" height="5" fill="#B2DFDB"/><rect x="529" y="365" width="3" height="4" fill="#B2DFDB"/><rect x="534" y="366" width="3" height="3" fill="#B2DFDB"/><rect x="539" y="366" width="3" height="3" fill="#B2DFDB"/><rect x="544" y="366" width="3" height="3" fill="#B2DFDB"/><rect x="548" y="366" width="3" height="3" fill="#26A69A"/><rect x="553" y="365" width="3" height="4" fill="#26A69A"/><rect x="558" y="364" width="3" height="5" fill="#26A69A"/><rect x="563" y="364" width="3" height="5" fill="#B2DFDB"/><rect x="567" y="365" width="3" height="4" fill="#B2DFDB"/><rect x="572" y="365" width="3" height="4" fill="#B2DFDB"/><rect x="577" y="365" width="3" height="4" fill="#26A69A"/><rect x="582" y="363" width="3" height="6" fill="#26A69A"/><rect x="586" y="361" width="3" height="8" fill="#26A69A"/><rect x="591" y="361" width="3" height="8" fill="#26A69A"/><rect x="596" y="360" width="3" height="9" fill="#26A69A"/><rect x="601" y="360" width="3" height="9" fill="#B2DFDB"/><rect x="606" y="361" width="3" height="8" fill="#B2DFDB"/><rect x="610" y="361" width="3" height="8" fill="#B2DFDB"/><rect x="615" y="362" width="3" height="7" fill="#B2DFDB"/><rect x="620" y="362" width="3" height="7" fill="#B2DFDB"/><rect x="625" y="365" width="3" height="4" fill="#B2DFDB"/><rect x="629" y="366" width="3" height="3" fill="#B2DFDB"/><rect x="634" y="367" width="3" height="2" fill="#B2DFDB"/><rect x="639" y="367" width="3" height="2" fill="#B2DFDB"/><rect x="644" y="367" width="3" height="2" fill="#B2DFDB"/><rect x="648" y="368" width="3" height="2" fill="#FF5252"/><rect x="653" y="368" width="3" height="4" fill="#FF5252"/><rect x="658" y="368" width="3" height="5" fill="#FF5252"/><rect x="663" y="368" width="3" height="5" fill="#FF5252"/><rect x="667" y="368" width="3" height="6" fill="#FF5252"/><rect x="672" y="368" width="3" height="6" fill="#FF5252"/><rect x="677" y="368" width="3" height="9" fill="#FF5252"/><rect x="682" y="368" width="3" height="10" fill="#FF5252"/><rect x="687" y="368" width="3" height="9" fill="#FFCDD2"/><rect x="691" y="368" width="3" height="9" fill="#FFCDD2"/><rect x="696" y="368" width="3" height="9" fill="#FFCDD2"/><rect x="701" y="368" width="3" height="7" fill="#FFCDD2"/><rect x="706" y="368" width="3" height="6" fill="#FFCDD2"/><rect x="710" y="368" width="3" height="3" fill="#FFCDD2"/><rect x="715" y="368" width="3" height="2" fill="#FFCDD2"/><rect x="720" y="367" width="3" height="2" fill="#26A69A"/><rect x="725" y="366" width="3" height="3" fill="#26A69A"/><rect x="729" y="366" width="3" height="3" fill="#B2DFDB"/><rect x="734" y="366" width="3" height="3" fill="#B2DFDB"/><rect x="739" y="367" width="3" height="2" fill="#B2DFDB"/><rect x="744" y="368" width="3" height="2" fill="#FF5252"/><rect x="749" y="368" width="3" height="2" fill="#FF5252"/><rect x="753" y="368" width="3" height="3" fill="#FF5252"/><rect x="758" y="368" width="3" height="4" fill="#FF5252"/><rect x="763" y="368" width="3" height="4" fill="#FF5252"/><rect x="768" y="368" width="3" height="3" fill="#FFCDD2"/><rect x="772" y="366" width="3" height="3" fill="#26A69A"/><rect x="777" y="364" width="3" height="5" fill="#26A69A"/><rect x="782" y="364" width="3" height="5" fill="#26A69A"/><rect x="787" y="365" width="3" height="4" fill="#B2DFDB"/><rect x="791" y="364" width="3" height="5" fill="#26A69A"/><rect x="796" y="364" width="3" height="5" fill="#26A69A"/><rect x="801" y="363" width="3" height="6" fill="#26A69A"/><rect x="806" y="363" width="3" height="6" fill="#B2DFDB"/><rect x="810" y="363" width="3" height="6" fill="#26A69A"/><rect x="815" y="363" width="3" height="6" fill="#B2DFDB"/><rect x="820" y="364" width="3" height="5" fill="#B2DFDB"/><rect x="825" y="366" width="3" height="3" fill="#B2DFDB"/><rect x="830" y="366" width="3" height="3" fill="#B2DFDB"/><rect x="834" y="367" width="3" height="2" fill="#B2DFDB"/><rect x="839" y="367" width="3" height="2" fill="#26A69A"/><rect x="844" y="366" width="3" height="3" fill="#26A69A"/><rect x="849" y="366" width="3" height="3" fill="#B2DFDB"/><rect x="853" y="366" width="3" height="3" fill="#26A69A"/><rect x="858" y="366" width="3" height="3" fill="#B2DFDB"/><rect x="863" y="366" width="3" height="3" fill="#26A69A"/><rect x="868" y="363" width="3" height="6" fill="#26A69A"/><rect x="872" y="363" width="3" height="6" fill="#26A69A"/><rect x="877" y="360" width="3" height="9" fill="#26A69A"/><rect x="882" y="357" width="3" height="12" fill="#26A69A"/><rect x="887" y="353" width="3" height="16" fill="#26A69A"/><rect x="892" y="351" width="3" height="18" fill="#26A69A"/><rect x="896" y="353" width="3" height="16" fill="#B2DFDB"/><rect x="901" y="353" width="3" height="16" fill="#B2DFDB"/><rect x="906" y="355" width="3" height="14" fill="#B2DFDB"/></g><path d="M10.0,374.4 C14.6,373.9 16.1,373.8 23.7,372.8 C31.3,371.8 26.0,372.1 32.8,371.5 C39.6,370.9 32.8,370.8 44.2,371.0 C55.6,371.2 51.8,371.3 67.0,372.1 C82.2,372.9 74.5,373.1 89.7,373.3 C104.9,373.5 97.3,373.3 112.5,372.8 C127.7,372.3 117.8,371.9 135.3,371.7 C152.8,371.5 147.4,371.0 164.9,372.1 C182.4,373.2 172.5,373.3 187.7,375.1 C202.9,376.9 197.6,376.6 210.5,377.4 C223.4,378.2 217.3,378.0 226.4,377.4 C235.5,376.8 228.7,377.6 237.8,375.6 C246.9,373.6 243.1,374.0 253.7,371.3 C264.3,368.6 259.0,369.2 269.6,367.4 C280.2,365.6 272.7,366.2 285.6,366.0 C298.5,365.8 293.1,366.1 308.3,366.7 C323.5,367.3 315.9,367.2 331.1,367.8 C346.3,368.4 338.7,368.9 353.9,368.5 C369.1,368.1 361.5,368.1 376.7,366.7 C391.9,365.3 384.3,365.8 399.5,364.4 C414.7,363.0 409.3,363.2 422.2,362.6 C435.1,362.0 426.8,362.0 438.2,362.6 C449.6,363.2 445.8,363.3 456.4,364.4 C467.0,365.5 457.9,365.6 470.0,366.0 C482.1,366.4 479.1,367.3 492.8,365.6 C506.5,363.9 497.3,363.9 511.0,361.0 C524.7,358.1 517.1,359.2 533.8,356.9 C550.5,354.6 545.2,355.9 561.1,354.2 C577.0,352.5 569.4,354.8 581.6,351.9 C593.8,349.0 586.2,349.5 597.6,345.5 C609.0,341.5 605.2,342.7 615.8,340.0 C626.4,337.3 618.9,338.0 629.5,337.3 C640.1,336.6 635.6,336.6 647.7,337.8 C659.8,339.0 655.3,338.7 665.9,341.0 C676.5,343.3 670.5,341.3 679.6,344.6 C688.7,347.9 681.5,347.2 693.2,350.8 C704.9,354.4 700.2,354.3 714.8,355.4 C729.4,356.5 725.5,354.4 737.0,354.2 C748.5,354.0 738.7,353.7 749.4,354.7 C760.1,355.7 756.8,357.2 769.1,357.2 C781.4,357.2 774.9,356.7 786.4,354.7 C797.9,352.7 792.2,354.0 803.7,351.2 C815.2,348.4 809.5,348.6 821.0,346.3 C832.5,344.0 826.0,345.6 838.3,344.3 C850.6,343.0 846.5,343.9 858.0,342.3 C869.5,340.7 864.6,342.0 872.8,339.4 C881.0,336.8 875.3,339.5 882.7,334.4 C890.1,329.3 887.0,330.3 895.1,324.1 C903.2,317.9 903.0,318.6 906.9,315.9" fill="none" stroke="#FF6D00" stroke-width="1.15" clip-path="url(#mc)"/><path d="M10.0,372.8 C13.7,372.2 17.6,371.6 23.7,370.5 C29.8,369.4 27.3,368.7 32.8,368.7 C38.3,368.7 38.1,369.6 44.2,370.5 C50.3,371.4 49.5,371.2 55.6,372.1 C61.7,373.0 59.1,372.9 67.0,373.7 C74.9,374.5 76.1,375.1 85.2,375.1 C94.3,375.1 90.8,374.5 101.1,373.7 C111.4,372.9 114.8,373.0 123.9,372.1 C133.0,371.2 128.0,370.6 135.3,370.5 C142.6,370.4 142.1,370.8 151.2,371.7 C160.3,372.6 159.8,372.7 169.5,374.0 C179.2,375.3 179.2,375.4 187.7,376.7 C196.2,378.0 194.0,378.6 201.3,379.0 C208.6,379.4 208.3,378.9 215.0,378.3 C221.7,377.7 220.9,378.4 226.4,376.7 C231.9,375.0 228.8,374.2 235.5,372.1 C242.2,370.0 244.1,370.6 251.4,369.0 C258.7,367.4 256.1,367.7 262.8,366.2 C269.5,364.7 267.3,363.8 276.4,363.3 C285.5,362.8 287.3,363.8 297.0,364.4 C306.7,365.0 302.6,364.6 312.9,365.6 C323.2,366.6 324.8,367.4 335.7,368.3 C346.6,369.2 345.4,369.2 353.9,369.0 C362.4,368.8 360.3,368.9 367.6,367.4 C374.9,365.9 371.5,364.9 381.2,363.3 C390.9,361.7 393.1,362.0 404.0,361.5 C414.9,361.0 412.5,361.2 422.2,361.5 C431.9,361.8 431.4,361.4 440.5,362.8 C449.6,364.2 448.5,365.7 456.4,366.7 C464.3,367.7 462.7,367.0 470.0,366.7 C477.3,366.4 477.6,366.6 483.7,365.6 C489.8,364.6 487.9,365.1 492.8,362.8 C497.7,360.5 495.8,358.9 501.9,356.9 C508.0,354.9 508.3,356.0 515.6,355.3 C522.9,354.6 521.9,354.2 529.2,354.2 C536.5,354.2 535.6,355.6 542.9,355.3 C550.2,355.0 550.5,354.0 556.6,353.0 C562.7,352.0 560.8,352.0 565.7,351.4 C570.6,350.8 569.9,351.8 574.8,350.8 C579.7,349.8 580.2,349.6 583.9,347.8 C587.6,346.0 584.8,346.6 588.5,343.9 C592.2,341.2 592.7,340.0 597.6,337.8 C602.5,335.6 600.6,336.6 606.7,335.5 C612.8,334.4 614.2,333.3 620.3,333.7 C626.4,334.1 623.4,335.9 629.5,337.1 C635.6,338.3 635.8,336.7 643.1,338.2 C650.4,339.7 649.5,340.4 656.8,342.8 C664.1,345.2 664.4,344.9 670.5,347.3 C676.6,349.7 674.7,349.2 679.6,351.9 C684.5,354.6 683.8,355.7 688.7,357.6 C693.6,359.5 690.8,359.3 697.8,359.2 C704.8,359.1 707.6,358.9 714.8,357.2 C722.0,355.5 719.4,354.1 724.7,353.0 C730.0,351.9 728.0,352.1 734.6,353.0 C741.2,353.9 741.8,354.2 749.4,356.2 C757.0,358.2 757.7,359.5 763.0,360.4 C768.3,361.3 766.5,361.1 769.1,359.6 C771.7,358.1 768.8,357.1 772.8,354.7 C776.8,352.3 777.7,352.1 784.0,350.5 C790.3,348.9 791.0,350.1 796.3,348.8 C801.6,347.5 798.4,347.3 803.7,345.6 C809.0,343.9 809.4,343.3 816.0,342.6 C822.6,341.9 821.8,342.8 828.4,343.1 C835.0,343.4 834.1,344.3 840.7,343.8 C847.3,343.3 847.2,342.3 853.1,341.4 C859.0,340.5 858.4,341.9 863.0,340.6 C867.6,339.3 867.1,338.1 870.4,336.4 C873.7,334.7 872.0,337.2 875.3,334.4 C878.6,331.6 878.1,332.4 882.7,325.8 C887.3,319.2 888.7,314.6 892.6,309.8 C896.5,305.0 894.9,309.3 897.5,307.8 C900.1,306.3 900.0,305.6 902.5,304.3 C905.0,303.0 905.7,303.4 906.9,303.1" fill="none" stroke="#2962FF" stroke-width="1.15" clip-path="url(#mc)"/><path d="M958,50 h73 a2,2 0 0 1 2,2 v27 a2,2 0 0 1 -2,2 h-73 z" fill="#F23645"/><path d="M958,199 h41 a2,2 0 0 1 2,2 v13 a2,2 0 0 1 -2,2 h-41 z" fill="#FDD835"/><path d="M958,216 h41 a2,2 0 0 1 2,2 v13 a2,2 0 0 1 -2,2 h-41 z" fill="#7E57C2"/><rect x="958.00" y="294.00" width="75.00" height="14.00" fill="#2962FF" /><path d="M958,308 h73 a2,2 0 0 1 2,2 v13 a2,2 0 0 1 -2,2 h-73 z" fill="#FF6D00"/><path d="M958,347 h73 a2,2 0 0 1 2,2 v12.5 a2,2 0 0 1 -2,2 h-73 z" fill="#B2DFDB"/><g fill="#d6d6d6"><path d="M10,523 h7.7 v10 h-4.2 v-6 h-3.5 z"/><circle cx="21" cy="525.4" r="2.1"/><path d="M24.8,523 h4.7 l-4.2,10 h-4.3 z"/></g></svg>

<div style="position:absolute;left:957px;top:28px;width:85px;height:33px;background:#0f0f0f"></div>
<div style="position:absolute;left:960.5px;top:30.5px;width:75px;height:23px;border:2px solid #313131;border-radius:6px;background:#0f0f0f"></div>

<div style="position:absolute;left:958px;top:61px;width:75px;height:20px;overflow:hidden"><div class="t" style="left:7.9px;top:-9px;font-size:13px;line-height:13px;color:#fff;transform:scaleX(0.886)">0.00003781</div></div>
<div class="t" style="left:9.5px;top:7.80px;font-size:13px;line-height:13px;height:16.900000000000002px;color:#d6d6d6;font-weight:normal;letter-spacing:0px;transform:scaleX(0.9289);-webkit-text-stroke:0.6px currentColor">glorykaburu67 created with TradingView.com, Jul 17, 2025 05:38 UTC-4</div><div class="t" style="left:17.42px;top:34.80px;font-size:13px;line-height:13px;height:16.900000000000002px;color:#b8b8b8;font-weight:normal;letter-spacing:0px;transform:scaleX(0.8828);-webkit-text-stroke:0.35px currentColor">Bonk</div><div class="t" style="left:48.3px;top:34.80px;font-size:13px;line-height:13px;height:16.900000000000002px;color:#b8b8b8;font-weight:normal;letter-spacing:0px;transform:scaleX(0.9);-webkit-text-stroke:0.35px currentColor">/</div><div class="t" style="left:56.81px;top:34.80px;font-size:13px;line-height:13px;height:16.900000000000002px;color:#b8b8b8;font-weight:normal;letter-spacing:0px;transform:scaleX(0.8855);-webkit-text-stroke:0.35px currentColor">US Dollar</div><div class="t" style="left:110.05px;top:34.80px;font-size:13px;line-height:13px;height:16.900000000000002px;color:#b8b8b8;font-weight:normal;letter-spacing:0px;transform:scaleX(0.9);-webkit-text-stroke:0.35px currentColor">·</div><div class="t" style="left:117.9px;top:34.80px;font-size:13px;line-height:13px;height:16.900000000000002px;color:#b8b8b8;font-weight:normal;letter-spacing:0px;transform:scaleX(0.9);-webkit-text-stroke:0.35px currentColor">4h</div><div class="t" style="left:134.25px;top:34.80px;font-size:13px;line-height:13px;height:16.900000000000002px;color:#b8b8b8;font-weight:normal;letter-spacing:0px;transform:scaleX(0.9);-webkit-text-stroke:0.35px currentColor">·</div><div class="t" style="left:142.7px;top:34.80px;font-size:13px;line-height:13px;height:16.900000000000002px;color:#b8b8b8;font-weight:normal;letter-spacing:0px;transform:scaleX(0.7806);-webkit-text-stroke:0.35px currentColor">COINBASE</div><div class="t" style="left:201.4px;top:34.80px;font-size:13px;line-height:13px;height:16.900000000000002px;color:#b8b8b8;font-weight:normal;letter-spacing:0px;transform:scaleX(0.9);-webkit-text-stroke:0.35px currentColor">O</div><div class="t" style="left:210.4px;top:34.80px;font-size:13px;line-height:13px;height:16.900000000000002px;color:#F23645;font-weight:normal;letter-spacing:0px;transform:scaleX(0.8725);-webkit-text-stroke:0.35px currentColor">0.00003863</div><div class="t" style="left:278.05px;top:34.80px;font-size:13px;line-height:13px;height:16.900000000000002px;color:#b8b8b8;font-weight:normal;letter-spacing:0px;transform:scaleX(0.9);-webkit-text-stroke:0.35px currentColor">H</div><div class="t" style="left:287.0px;top:34.80px;font-size:13px;line-height:13px;height:16.900000000000002px;color:#F23645;font-weight:normal;letter-spacing:0px;transform:scaleX(0.8652);-webkit-text-stroke:0.35px currentColor">0.00003863</div><div class="t" style="left:353.85px;top:34.80px;font-size:13px;line-height:13px;height:16.900000000000002px;color:#b8b8b8;font-weight:normal;letter-spacing:0px;transform:scaleX(0.9);-webkit-text-stroke:0.35px currentColor">L</div><div class="t" style="left:361.3px;top:34.80px;font-size:13px;line-height:13px;height:16.900000000000002px;color:#F23645;font-weight:normal;letter-spacing:0px;transform:scaleX(0.8652);-webkit-text-stroke:0.35px currentColor">0.00003717</div><div class="t" style="left:427.95px;top:34.80px;font-size:13px;line-height:13px;height:16.900000000000002px;color:#b8b8b8;font-weight:normal;letter-spacing:0px;transform:scaleX(0.9);-webkit-text-stroke:0.35px currentColor">C</div><div class="t" style="left:435.6px;top:34.80px;font-size:13px;line-height:13px;height:16.900000000000002px;color:#F23645;font-weight:normal;letter-spacing:0px;transform:scaleX(0.8754);-webkit-text-stroke:0.35px currentColor">0.00003781</div><div class="t" style="left:505.0px;top:34.80px;font-size:13px;line-height:13px;height:16.900000000000002px;color:#F23645;font-weight:normal;letter-spacing:0px;transform:scaleX(0.8624);-webkit-text-stroke:0.35px currentColor">−0.00000081 (−2.10%)</div><div class="t" style="left:17.51px;top:207.20px;font-size:13px;line-height:13px;height:16.900000000000002px;color:#b8b8b8;font-weight:normal;letter-spacing:0px;transform:scaleX(0.8894);-webkit-text-stroke:0.35px currentColor">RSI (14, close)</div><div class="t" style="left:102.4px;top:207.20px;font-size:13px;line-height:13px;height:16.900000000000002px;color:#7E57C2;font-weight:normal;letter-spacing:0px;transform:scaleX(0.9);-webkit-text-stroke:0.35px currentColor">73.45</div><div class="t" style="left:139.2px;top:207.20px;font-size:13px;line-height:13px;height:16.900000000000002px;color:#FDD835;font-weight:normal;letter-spacing:0px;transform:scaleX(0.8844);-webkit-text-stroke:0.35px currentColor">75.12</div><div class="t" style="left:17.1px;top:301.90px;font-size:13px;line-height:13px;height:16.900000000000002px;color:#b8b8b8;font-weight:normal;letter-spacing:0px;transform:scaleX(0.9008);-webkit-text-stroke:0.35px currentColor">MACD (12, 26, close)</div><div class="t" style="left:136.6px;top:301.90px;font-size:13px;line-height:13px;height:16.900000000000002px;color:#B2DFDB;font-weight:normal;letter-spacing:0px;transform:scaleX(0.8696);-webkit-text-stroke:0.35px currentColor">0.00000068</div><div class="t" style="left:204.7px;top:301.90px;font-size:13px;line-height:13px;height:16.900000000000002px;color:#2962FF;font-weight:normal;letter-spacing:0px;transform:scaleX(0.8739);-webkit-text-stroke:0.35px currentColor">0.00000340</div><div class="t" style="left:273.2px;top:301.90px;font-size:13px;line-height:13px;height:16.900000000000002px;color:#FF6D00;font-weight:normal;letter-spacing:0px;transform:scaleX(0.8652);-webkit-text-stroke:0.35px currentColor">0.00000272</div><div class="t" style="left:16.67px;top:397.00px;font-size:13px;line-height:13px;height:16.900000000000002px;color:#b8b8b8;font-weight:normal;letter-spacing:0px;transform:scaleX(0.935);-webkit-text-stroke:0.35px currentColor">MACD (12, 26, close): The maximum number of studies per chart has been reached for current subscription</div><div class="t" style="left:965.7px;top:88.00px;font-size:13px;line-height:13px;height:16.900000000000002px;color:#b8b8b8;font-weight:normal;letter-spacing:0px;transform:scaleX(0.887);-webkit-text-stroke:0.35px currentColor">0.00003000</div><div class="t" style="left:965.7px;top:136.00px;font-size:13px;line-height:13px;height:16.900000000000002px;color:#b8b8b8;font-weight:normal;letter-spacing:0px;transform:scaleX(0.887);-webkit-text-stroke:0.35px currentColor">0.00002000</div><div class="t" style="left:965.7px;top:184.00px;font-size:13px;line-height:13px;height:16.900000000000002px;color:#b8b8b8;font-weight:normal;letter-spacing:0px;transform:scaleX(0.887);-webkit-text-stroke:0.35px currentColor">0.00001000</div><div class="t" style="left:966.0px;top:256.00px;font-size:13px;line-height:13px;height:16.900000000000002px;color:#b8b8b8;font-weight:normal;letter-spacing:0px;transform:scaleX(0.925);-webkit-text-stroke:0.35px currentColor">40.00</div><div class="t" style="left:965.9px;top:324.00px;font-size:13px;line-height:13px;height:16.900000000000002px;color:#b8b8b8;font-weight:normal;letter-spacing:0px;transform:scaleX(0.8855);-webkit-text-stroke:0.35px currentColor">0.00000200</div><div class="t" style="left:965.9px;top:361.00px;font-size:13px;line-height:13px;height:16.900000000000002px;color:#b8b8b8;font-weight:normal;letter-spacing:0px;transform:scaleX(0.8855);-webkit-text-stroke:0.35px currentColor">0.00000000</div><div class="t" style="left:965.9px;top:391.50px;font-size:13px;line-height:13px;height:16.900000000000002px;color:#b8b8b8;font-weight:normal;letter-spacing:0px;transform:scaleX(0.8855);-webkit-text-stroke:0.35px currentColor">0.50000000</div><div class="t" style="left:965.9px;top:429.50px;font-size:13px;line-height:13px;height:16.900000000000002px;color:#b8b8b8;font-weight:normal;letter-spacing:0px;transform:scaleX(0.8855);-webkit-text-stroke:0.35px currentColor">0.00000000</div><div class="t" style="left:965.9px;top:467.50px;font-size:13px;line-height:13px;height:16.900000000000002px;color:#b8b8b8;font-weight:normal;letter-spacing:0px;transform:scaleX(0.8829);-webkit-text-stroke:0.35px currentColor">−0.50000000</div><div class="t" style="left:969.5px;top:37.80px;font-size:13px;line-height:13px;height:16.900000000000002px;color:#d6d6d6;font-weight:normal;letter-spacing:0px;transform:scaleX(0.7962);-webkit-text-stroke:0.35px currentColor">USD</div><div class="t" style="left:966.5px;top:201.00px;font-size:13px;line-height:13px;height:16.900000000000002px;color:#131313;font-weight:normal;letter-spacing:0px;transform:scaleX(0.8969);-webkit-text-stroke:0.35px currentColor">75.12</div><div class="t" style="left:966.5px;top:218.00px;font-size:13px;line-height:13px;height:16.900000000000002px;color:#ffffff;font-weight:normal;letter-spacing:0px;transform:scaleX(0.8969);-webkit-text-stroke:0.35px currentColor">73.45</div><div class="t" style="left:965.9px;top:293.00px;font-size:13px;line-height:13px;height:16.900000000000002px;color:#ffffff;font-weight:normal;letter-spacing:0px;transform:scaleX(0.8855);-webkit-text-stroke:0.35px currentColor">0.00000340</div><div class="t" style="left:965.9px;top:309.50px;font-size:13px;line-height:13px;height:16.900000000000002px;color:#ffffff;font-weight:normal;letter-spacing:0px;transform:scaleX(0.8855);-webkit-text-stroke:0.35px currentColor">0.00000272</div><div class="t" style="left:965.9px;top:349.00px;font-size:13px;line-height:13px;height:16.900000000000002px;color:#131313;font-weight:normal;letter-spacing:0px;transform:scaleX(0.8855);-webkit-text-stroke:0.35px currentColor">0.00000068</div><div class="t" style="left:965.9px;top:66.00px;font-size:13px;line-height:13px;height:16.900000000000002px;color:#fbc9cd;font-weight:normal;letter-spacing:0px;transform:scaleX(0.928);-webkit-text-stroke:0.35px currentColor">02:21:03</div><div class="t" style="left:37.75px;top:490.00px;font-size:13px;line-height:13px;height:16.900000000000002px;color:#b8b8b8;font-weight:normal;letter-spacing:0px;transform:scaleX(0.9);-webkit-text-stroke:0.35px currentColor">17</div><div class="t" style="left:94.75px;top:490.00px;font-size:13px;line-height:13px;height:16.900000000000002px;color:#b8b8b8;font-weight:normal;letter-spacing:0px;transform:scaleX(0.9);-webkit-text-stroke:0.35px currentColor">19</div><div class="t" style="left:152.2px;top:490.00px;font-size:13px;line-height:13px;height:16.900000000000002px;color:#b8b8b8;font-weight:normal;letter-spacing:0px;transform:scaleX(0.9);-webkit-text-stroke:0.35px currentColor">21</div><div class="t" style="left:209.2px;top:490.00px;font-size:13px;line-height:13px;height:16.900000000000002px;color:#b8b8b8;font-weight:normal;letter-spacing:0px;transform:scaleX(0.9);-webkit-text-stroke:0.35px currentColor">23</div><div class="t" style="left:267.2px;top:490.00px;font-size:13px;line-height:13px;height:16.900000000000002px;color:#b8b8b8;font-weight:normal;letter-spacing:0px;transform:scaleX(0.9);-webkit-text-stroke:0.35px currentColor">25</div><div class="t" style="left:324.2px;top:490.00px;font-size:13px;line-height:13px;height:16.900000000000002px;color:#b8b8b8;font-weight:normal;letter-spacing:0px;transform:scaleX(0.9);-webkit-text-stroke:0.35px currentColor">27</div><div class="t" style="left:381.2px;top:490.00px;font-size:13px;line-height:13px;height:16.900000000000002px;color:#b8b8b8;font-weight:normal;letter-spacing:0px;transform:scaleX(0.9);-webkit-text-stroke:0.35px currentColor">29</div><div class="t" style="left:436.4px;top:490.00px;font-size:13px;line-height:13px;height:16.900000000000002px;color:#b8b8b8;font-weight:bold;letter-spacing:0px;transform:scaleX(0.9);-webkit-text-stroke:0.35px currentColor">Jul</div><div class="t" style="left:498.35px;top:490.00px;font-size:13px;line-height:13px;height:16.900000000000002px;color:#b8b8b8;font-weight:normal;letter-spacing:0px;transform:scaleX(0.9);-webkit-text-stroke:0.35px currentColor">3</div><div class="t" style="left:556.35px;top:490.00px;font-size:13px;line-height:13px;height:16.900000000000002px;color:#b8b8b8;font-weight:normal;letter-spacing:0px;transform:scaleX(0.9);-webkit-text-stroke:0.35px currentColor">5</div><div class="t" style="left:613.35px;top:490.00px;font-size:13px;line-height:13px;height:16.900000000000002px;color:#b8b8b8;font-weight:normal;letter-spacing:0px;transform:scaleX(0.9);-webkit-text-stroke:0.35px currentColor">7</div><div class="t" style="left:670.35px;top:490.00px;font-size:13px;line-height:13px;height:16.900000000000002px;color:#b8b8b8;font-weight:normal;letter-spacing:0px;transform:scaleX(0.9);-webkit-text-stroke:0.35px currentColor">9</div><div class="t" style="left:724.2px;top:490.00px;font-size:13px;line-height:13px;height:16.900000000000002px;color:#b8b8b8;font-weight:normal;letter-spacing:0px;transform:scaleX(0.9);-webkit-text-stroke:0.35px currentColor">11</div><div class="t" style="left:781.75px;top:490.00px;font-size:13px;line-height:13px;height:16.900000000000002px;color:#b8b8b8;font-weight:normal;letter-spacing:0px;transform:scaleX(0.9);-webkit-text-stroke:0.35px currentColor">13</div><div class="t" style="left:838.75px;top:490.00px;font-size:13px;line-height:13px;height:16.900000000000002px;color:#b8b8b8;font-weight:normal;letter-spacing:0px;transform:scaleX(0.9);-webkit-text-stroke:0.35px currentColor">15</div><div class="t" style="left:895.75px;top:490.00px;font-size:13px;line-height:13px;height:16.900000000000002px;color:#b8b8b8;font-weight:normal;letter-spacing:0px;transform:scaleX(0.9);-webkit-text-stroke:0.35px currentColor">17</div><div class="t" style="left:33.9px;top:522.00px;font-size:13px;line-height:13px;height:16.900000000000002px;color:#d6d6d6;font-weight:normal;letter-spacing:0px;transform:scaleX(0.9625);-webkit-text-stroke:0.6px currentColor">TradingView</div>
</body></html>
